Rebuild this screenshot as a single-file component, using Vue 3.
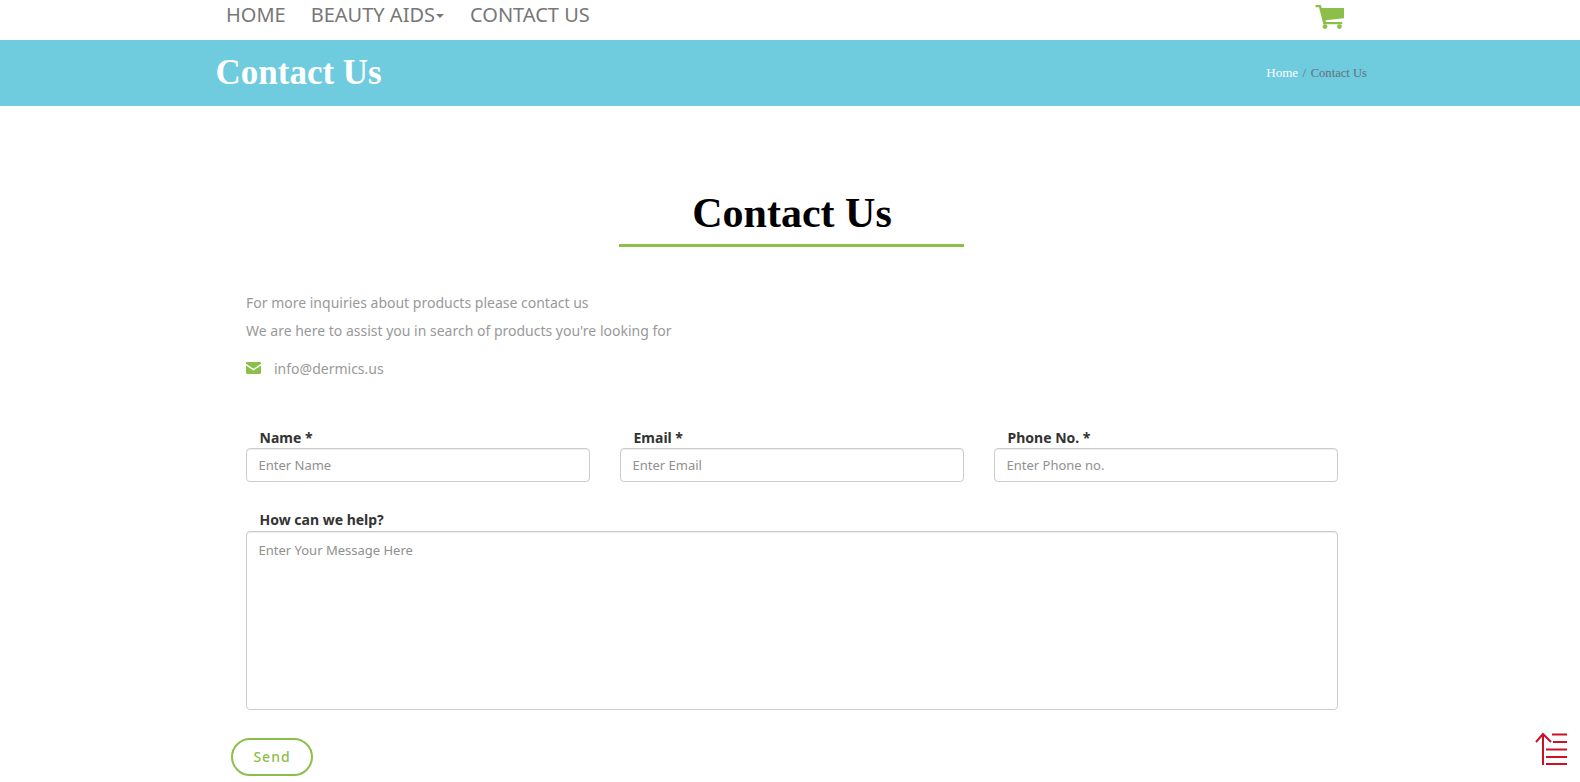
<script setup>
const fields = [
  { label: 'Name *', placeholder: 'Enter Name' },
  { label: 'Email *', placeholder: 'Enter Email' },
  { label: 'Phone No. *', placeholder: 'Enter Phone no.' },
]
</script>

<template>
  <div class="page">
    <header class="topbar">
      <nav class="nav">
        <a>HOME</a>
        <a>BEAUTY AIDS<i class="caret"></i></a>
        <a>CONTACT US</a>
      </nav>
      <svg class="cart" viewBox="0 0 29 24" width="29" height="24">
        <path fill="#8cbf4a" d="M.5 0h5.200l1.100 3H29v10.200l-18.500 2 .5 1.800h16.200v2.200H8.300L4 2.200H.5z" />
        <circle cx="10" cy="21.600" r="2.400" fill="#8cbf4a" />
        <circle cx="24.400" cy="21.600" r="2.400" fill="#8cbf4a" />
      </svg>
    </header>

    <section class="banner">
      <h1>Contact Us</h1>
      <div class="crumbs"><span class="home">Home</span><span class="sep">/</span><span class="current">Contact Us</span></div>
    </section>

    <main class="main">
      <h2>Contact Us</h2>
      <div class="rule"></div>
      <div class="intro">
        <p>For more inquiries about products please contact us</p>
        <p>We are here to assist you in search of products you're looking for</p>
      </div>
      <div class="mail">
        <svg viewBox="0 0 15 12" width="15" height="12">
          <path fill="#8cbf4a" d="M0 1.200C0 .5.5 0 1.200 0h12.600c.7 0 1.200.5 1.200 1.200v.6L7.500 6.800 0 1.800zM0 3.400l7.500 5 7.500-5v7.400c0 .7-.5 1.200-1.200 1.200H1.200C.5 12 0 11.500 0 10.800z" />
        </svg>
        <span>info@dermics.us</span>
      </div>

      <form class="form" @submit.prevent>
        <div class="row">
          <label v-for="f in fields" :key="f.label" class="field">
            <span>{{ f.label }}</span>
            <input type="text" :placeholder="f.placeholder" />
          </label>
        </div>
        <label class="field message">
          <span>How can we help?</span>
          <textarea placeholder="Enter Your Message Here"></textarea>
        </label>
        <button type="submit" class="send">Send</button>
      </form>
    </main>

    <svg class="totop" viewBox="0 0 34 34" width="34" height="34">
      <g stroke="#cc1126" fill="none" stroke-width="2">
        <path d="M8 33V2M1 10l7-8 8 8" />
        <path d="M17 2.500h15M18 10h14M11 17.500h21M11 25h21M11 32h21" />
      </g>
    </svg>
  </div>
</template>

<style>
html, body { margin: 0; background: #fff; overflow: hidden; }
</style>

<style scoped>
.page {
  position: relative;
  height: 782px;
  overflow: hidden;
  font-family: "Noto Sans", "Open Sans", sans-serif;
  color: #333;
}
.topbar {
  height: 40px;
  display: flex;
  justify-content: space-between;
  padding: 0 236px 0 226px;
}
.nav { display: flex; gap: 25px; height: 28px; align-items: center; font-size: 20px; color: #777; }
.nav a { white-space: nowrap; }
.caret {
  display: inline-block;
  border-top: 4px solid #777;
  border-left: 4px solid transparent;
  border-right: 4px solid transparent;
  vertical-align: middle;
  margin-left: 1px;
  margin-right: 1px;
}
.cart { margin-top: 5px; }
.banner {
  height: 66px;
  background: #6fcbde;
  display: flex;
  align-items: center;
  justify-content: space-between;
  padding: 0 213px 0 215.500px;
}
.banner h1 {
  margin: 0;
  font: bold 35px "Liberation Serif", serif;
  color: #fff;
}
.crumbs { font: 13px "Liberation Serif", serif; color: #64707c; display: flex; align-items: baseline; gap: 4.500px; }
.current { font-size: 12.600px; }
.home { color: #fff; }
.main { padding: 0 242px 0 246px; }
h2 {
  margin: 82px 0 0;
  text-align: center;
  font: bold 42px/50px "Liberation Serif", serif;
  color: #000;
}
.rule { width: 345px; height: 3px; background: #8cbf4a; margin: 6px 0 0 373px; }
.intro { margin-top: 42px; font-size: 14px; color: #999; }
.intro p { margin: 0; line-height: 28px; }
.mail { display: flex; align-items: center; gap: 13px; margin-top: 9px; height: 28px; font-size: 14px; color: #999; }
.form { margin-top: 46px; }
.row { display: grid; grid-template-columns: repeat(3, 1fr); gap: 30px; }
.field { display: block; }
.field span {
  display: block;
  padding-left: 13.500px;
  font-size: 14px;
  font-weight: 700;
  line-height: 20px;
  height: 20px;
  color: #333;
}
input, textarea {
  display: block;
  box-sizing: border-box;
  width: 100%;
  border: 1px solid #ccc;
  border-radius: 4px;
  box-shadow: inset 0 1px 1px rgba(0,0,0,.075);
  padding: 6px 11.500px;
  font: 13px "Noto Sans", sans-serif;
  color: #555;
  outline: none;
}
input { height: 34px; }
textarea { height: 179px; resize: none; padding-top: 9px; }
input::placeholder, textarea::placeholder { color: #909090; opacity: 1; }
.message { margin-top: 28px; }
.message span { height: 21px; }
.send {
  display: block;
  box-sizing: border-box;
  margin: 28px 0 0 -15px;
  width: 82px;
  height: 38px;
  padding: 0 0 2px;
  border: 2px solid #8cbf4a;
  border-radius: 19px;
  background: #fff;
  color: #8cbf4a;
  font: 500 14px "Noto Sans", sans-serif;
  letter-spacing: 1px;
}
.totop { position: absolute; right: 11px; top: 732px; }
</style>
